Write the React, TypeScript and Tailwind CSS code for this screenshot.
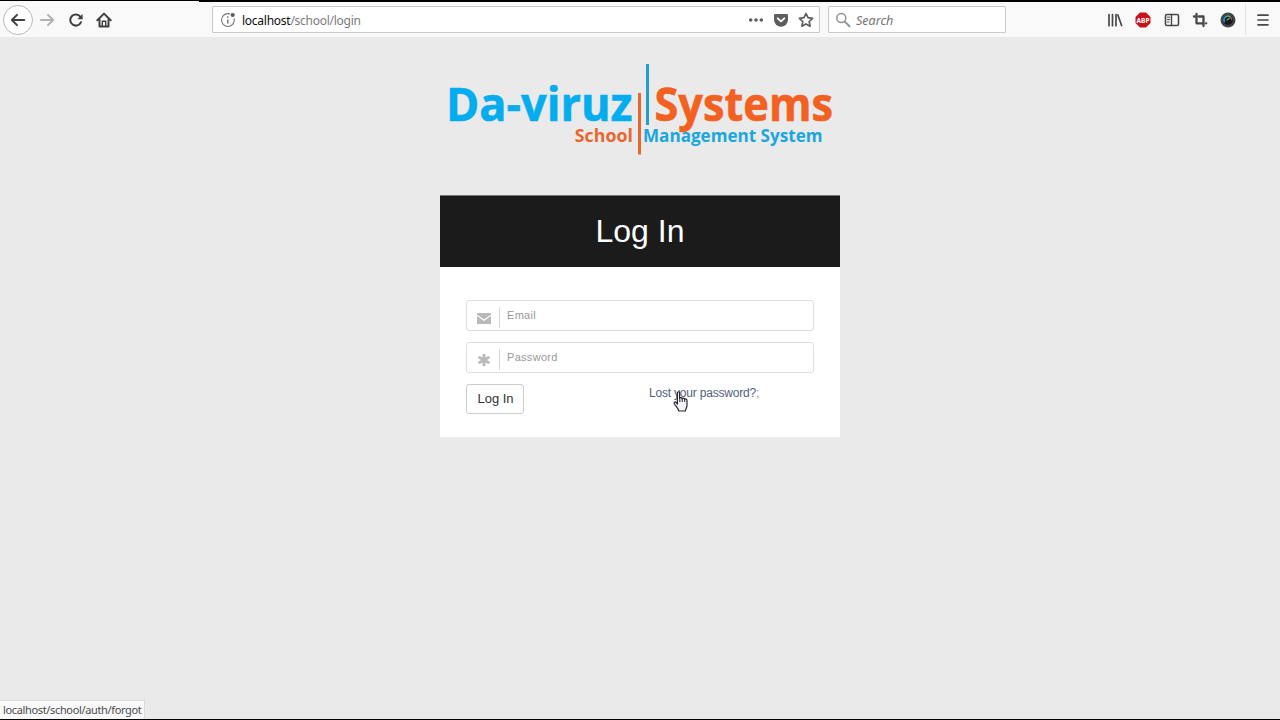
import type { ReactNode } from 'react';

interface IconProps {
  children: ReactNode;
  className?: string;
  size?: number;
}

function Icon({ children, className = '', size = 16 }: IconProps) {
  return (
    <svg
      width={size}
      height={size}
      viewBox="0 0 16 16"
      fill="none"
      stroke="currentColor"
      strokeWidth="2"
      strokeLinecap="round"
      strokeLinejoin="round"
      className={`shrink-0 ${className}`}
    >
      {children}
    </svg>
  );
}

function NavButtons() {
  return (
    <div className="flex items-center text-[#3f3f42]">
      <div className="ml-[3px] flex h-[30px] w-[30px] items-center justify-center rounded-full border border-[#b9b9bb] bg-white">
        <Icon>
          <path d="M14.2 8H2M7 2.9L1.9 8 7 13.1" />
        </Icon>
      </div>
      <Icon className="ml-[6px] text-[#b1b1b3]">
        <path d="M2 8h12M9 2.9L14.1 8 9 13.1" />
      </Icon>
      <Icon className="ml-[13px]">
        <path d="M13 10.2a5.6 5.6 0 1 1-.7-5.6" />
        <path d="M14.6 2v5.2H9.4z" fill="currentColor" stroke="none" />
      </Icon>
      <Icon className="ml-[12px]">
        <path d="M1.3 8.2L8 1.6l6.7 6.6" />
        <path d="M3.5 7.5v7h9v-7" />
        <path d="M6.3 14V9.3h3.4V14" strokeWidth="1.4" />
      </Icon>
    </div>
  );
}

function AddressBar() {
  return (
    <div className="ml-[100px] flex h-[27px] w-[608px] items-center rounded-[1px] border border-[#c9c9ca] bg-white pr-[5px] pl-[7px]">
      <Icon className="text-[#737373]">
        <path d="M9.6 1.9a6.4 6.4 0 1 0 4.6 4.8" strokeWidth="1.1" />
        <path d="M7.8 7.4v4" strokeWidth="1.5" strokeLinecap="butt" />
        <circle cx="7.8" cy="5.1" r=".9" fill="currentColor" stroke="none" />
        <circle cx="12.7" cy="3" r="2.1" fill="#5b5b5b" stroke="none" />
      </Icon>
      <div className="ml-[6px] flex-1 pt-[3px] text-[12px] leading-[18px] tracking-[-0.26px] text-[#7b7b7d]">
        <span className="text-[#0c0c0d]">localhost</span>/school/login
      </div>
      <Icon className="text-[#5e5e60]">
        <g fill="currentColor" stroke="none">
          <circle cx="2.7" cy="8" r="1.8" />
          <circle cx="8" cy="8" r="1.8" />
          <circle cx="13.3" cy="8" r="1.8" />
        </g>
      </Icon>
      <Icon className="ml-[9px] text-[#5e5e60]">
        <path
          d="M2.3 2h11.4c.8 0 1.3.5 1.3 1.3v4.4a7 7 0 0 1-14 0V3.3C1 2.5 1.5 2 2.3 2z"
          fill="currentColor"
          stroke="none"
        />
        <path d="M4.7 6.3L8 9.4l3.3-3.1" stroke="white" strokeWidth="1.8" />
      </Icon>
      <Icon className="ml-[9px] text-[#5e5e60]">
        <path
          d="M8 1.5l2 4.2 4.6.6-3.4 3.2.9 4.7L8 11.9l-4.1 2.3.9-4.7-3.4-3.2 4.6-.6z"
          strokeWidth="1.7"
        />
      </Icon>
    </div>
  );
}

function SearchBox() {
  return (
    <div className="ml-[8px] flex h-[27px] w-[178px] items-center rounded-[1px] border border-[#c9c9ca] bg-white pl-[6px]">
      <Icon className="text-[#929294]">
        <circle cx="6.3" cy="6" r="4.5" strokeWidth="1.5" />
        <path d="M9.8 9.6l4.7 4.6" strokeWidth="2" />
      </Icon>
      <span className="ml-[5px] pt-[3px] text-[12.5px] leading-[18px] text-[#747476] italic">Search</span>
    </div>
  );
}

function ToolbarActions() {
  return (
    <div className="ml-auto flex h-full items-center text-[#48484b]">
      <Icon>
        <path d="M2 2.5v11.2M5.5 2.5v11.2M9 2.5v11.2" strokeWidth="1.7" />
        <path d="M10.9 3l3.7 10.5" strokeWidth="1.7" />
      </Icon>
      <Icon className="ml-[12px]">
        <path d="M5 .5h6L15.5 5v6L11 15.5H5L.5 11V5z" fill="#c8131b" stroke="none" />
        <text
          x="8"
          y="10.7"
          textAnchor="middle"
          fontSize="7.8"
          fontWeight="700"
          fill="white"
          stroke="none"
          textLength="13"
          lengthAdjust="spacingAndGlyphs"
        >
          ABP
        </text>
      </Icon>
      <Icon className="ml-[13px]">
        <rect x="1.5" y="2.5" width="13" height="11" rx="1.5" strokeWidth="1.6" />
        <path d="M7.5 2.5v11" strokeWidth="1.4" />
        <path d="M3.5 5.2h2.3M3.5 7.6h2.3M3.5 10h1.5" strokeWidth="1" />
      </Icon>
      <Icon className="ml-[12px]">
        <path d="M4.5 2v9.3h6M2 4.5h.6M6.8 4.5h4.7V14M14 11.3h.2" strokeWidth="2.3" />
      </Icon>
      <Icon className="ml-[12px]">
        <circle cx="8" cy="8" r="7.5" fill="#444447" stroke="none" />
        <circle cx="8" cy="8" r="5" fill="#15171a" stroke="none" />
        <path d="M4.3 9.5A4 4 0 0 1 6.1 4.6" stroke="#338ccc" strokeWidth="1.7" />
        <path d="M6.7 4.2A4 4 0 0 1 10 4.6" stroke="#44b974" strokeWidth="1.7" />
        <path d="M7 8L9.4 6.2" stroke="#3bb7a0" strokeWidth="1.2" />
        <path d="M10.7 5.4a4 4 0 0 1 1 2" stroke="#c54257" strokeWidth="1.5" />
      </Icon>
      <div className="ml-[9px] h-[31px] w-px bg-[#e2e2e3]" />
      <Icon className="mr-[9px] ml-[9px]">
        <path d="M3 3.2h10M3 8h10M3 12.8h10" strokeWidth="1.7" />
      </Icon>
    </div>
  );
}

function Logo() {
  return (
    <svg
      width="400"
      height="100"
      viewBox="440 60 400 100"
      className="overflow-visible font-['Open_Sans','Noto_Sans',sans-serif] font-bold"
    >
      <g fill="#06adee" stroke="#06adee" strokeWidth=".6">
        <text x="446" y="121" fontSize="46" textLength="186.5" lengthAdjust="spacingAndGlyphs">
          Da-viruz
        </text>
      </g>
      <g fill="#f2611f" stroke="#f2611f" strokeWidth=".6">
        <text x="654.5" y="121" fontSize="46" textLength="178.5" lengthAdjust="spacingAndGlyphs">
          Systems
        </text>
      </g>
      <text x="574.8" y="142.3" fontSize="18" fill="#e8672f" textLength="58" lengthAdjust="spacingAndGlyphs">
        School
      </text>
      <text x="643" y="142.3" fontSize="18" fill="#1aa7df" textLength="179.5" lengthAdjust="spacingAndGlyphs">
        Management System
      </text>
      <rect x="646" y="64" width="3" height="61" fill="#219fd0" />
      <rect x="638" y="93" width="3" height="61.5" fill="#e8672f" />
    </svg>
  );
}

interface FieldProps {
  icon: ReactNode;
  label: string;
}

function Field({ icon, label }: FieldProps) {
  return (
    <div className="flex h-[31px] rounded-[3px] border border-[#dedede] bg-white text-[#b9b9b9]">
      <div className="flex w-8 items-center justify-center pt-[5px] pl-[2px]">{icon}</div>
      <div className="mt-[6px] h-[21px] w-px bg-[#d9d9d9]" />
      <span className="ml-[7px] pt-[5px] text-[11px] leading-[18px] tracking-[0.3px] text-[#999999]">{label}</span>
    </div>
  );
}

function LoginCard() {
  return (
    <div className="h-[242px] w-[400px] bg-white">
      <h1 className="flex h-[72px] items-center justify-center border-t border-[#777777] bg-[#1b1b1b] pb-px text-[32px] text-white">
        Log In
      </h1>
      <div className="px-[26px] pt-[33px]">
        <div className="flex flex-col gap-[11px]">
          <Field
            label="Email"
            icon={
              <svg width="14" height="11" viewBox="0 0 14 11" fill="currentColor">
                <path d="M0 1a1 1 0 0 1 1-1h12a1 1 0 0 1 1 1v.6L7 6.6 0 1.6z" />
                <path d="M0 3l7 5 7-5v7a1 1 0 0 1-1 1H1a1 1 0 0 1-1-1z" />
              </svg>
            }
          />
          <Field
            label="Password"
            icon={
              <svg width="12" height="12" viewBox="0 0 12 12" stroke="currentColor" strokeWidth="2.8">
                <path d="M6 0v12M.7 3l10.6 6M.7 9l10.6-6" />
              </svg>
            }
          />
        </div>
        <div className="mt-[11px] flex">
          <button className="h-[30px] w-[58px] rounded-[3px] border border-[#cccccc] bg-white pl-px text-[13px] text-[#333333]">
            Log In
          </button>
          <div className="relative ml-[125px]">
            <a className="block text-[12px] leading-[18px] tracking-[-0.2px] text-[#53607d]">
              Lost your password?<span className="text-[#929292]">;</span>
            </a>
            <svg className="absolute top-[7px] left-[24px]" width="16" height="21" viewBox="0 0 16 21">
              <path
                d="M4.4 13V2c0-1.700 2.200-1.700 2.200 0v5.400c.3-1.100 2.300-1 2.500.3.400-1 2.300-.8 2.500.7.700-.8 2.400-.4 2.400 1v5.100c0 1.800-1.200 3-1.600 5.500H5.800c-.3-2.300-2.700-4.300-4.500-7.300-.7-1.300.6-2.400 1.700-1.400z"
                fill="#f4f4f4"
                stroke="#24262c"
                strokeWidth="1.2"
                strokeLinejoin="round"
              />
              <path d="M6.8 7.5V11M9.2 8v3M11.7 8.5V11" stroke="#24262c" strokeWidth="1" />
            </svg>
          </div>
        </div>
      </div>
    </div>
  );
}

export default function App() {
  return (
    <div className="relative flex h-[720px] w-[1280px] flex-col overflow-hidden border-b border-black bg-[#eaeaea] font-['Liberation_Sans',Arial,sans-serif]">
      <div className="flex h-[2px] shrink-0 bg-[#f9f9fa]">
        <div className="h-px w-[199px] bg-black" />
        <div className="h-[2px] flex-1 bg-black" />
      </div>
      <header className="flex h-[35px] shrink-0 items-center bg-[#f9f9fa] font-['Noto_Sans','Open_Sans',sans-serif]">
        <NavButtons />
        <AddressBar />
        <SearchBox />
        <ToolbarActions />
      </header>
      <main className="flex flex-col items-center pt-[23px]">
        <Logo />
        <div className="mt-[35px]">
          <LoginCard />
        </div>
      </main>
      <div className="absolute bottom-0 left-0 h-[19px] w-[145px] border-t border-r border-[#dcdcdd] bg-[#f9f9fa] pl-[3px] font-['Noto_Sans','Open_Sans',sans-serif] text-[11px] leading-[18px] tracking-[-0.35px] whitespace-nowrap text-[#4a4a4c]">
        localhost/school/auth/forgot
      </div>
    </div>
  );
}
